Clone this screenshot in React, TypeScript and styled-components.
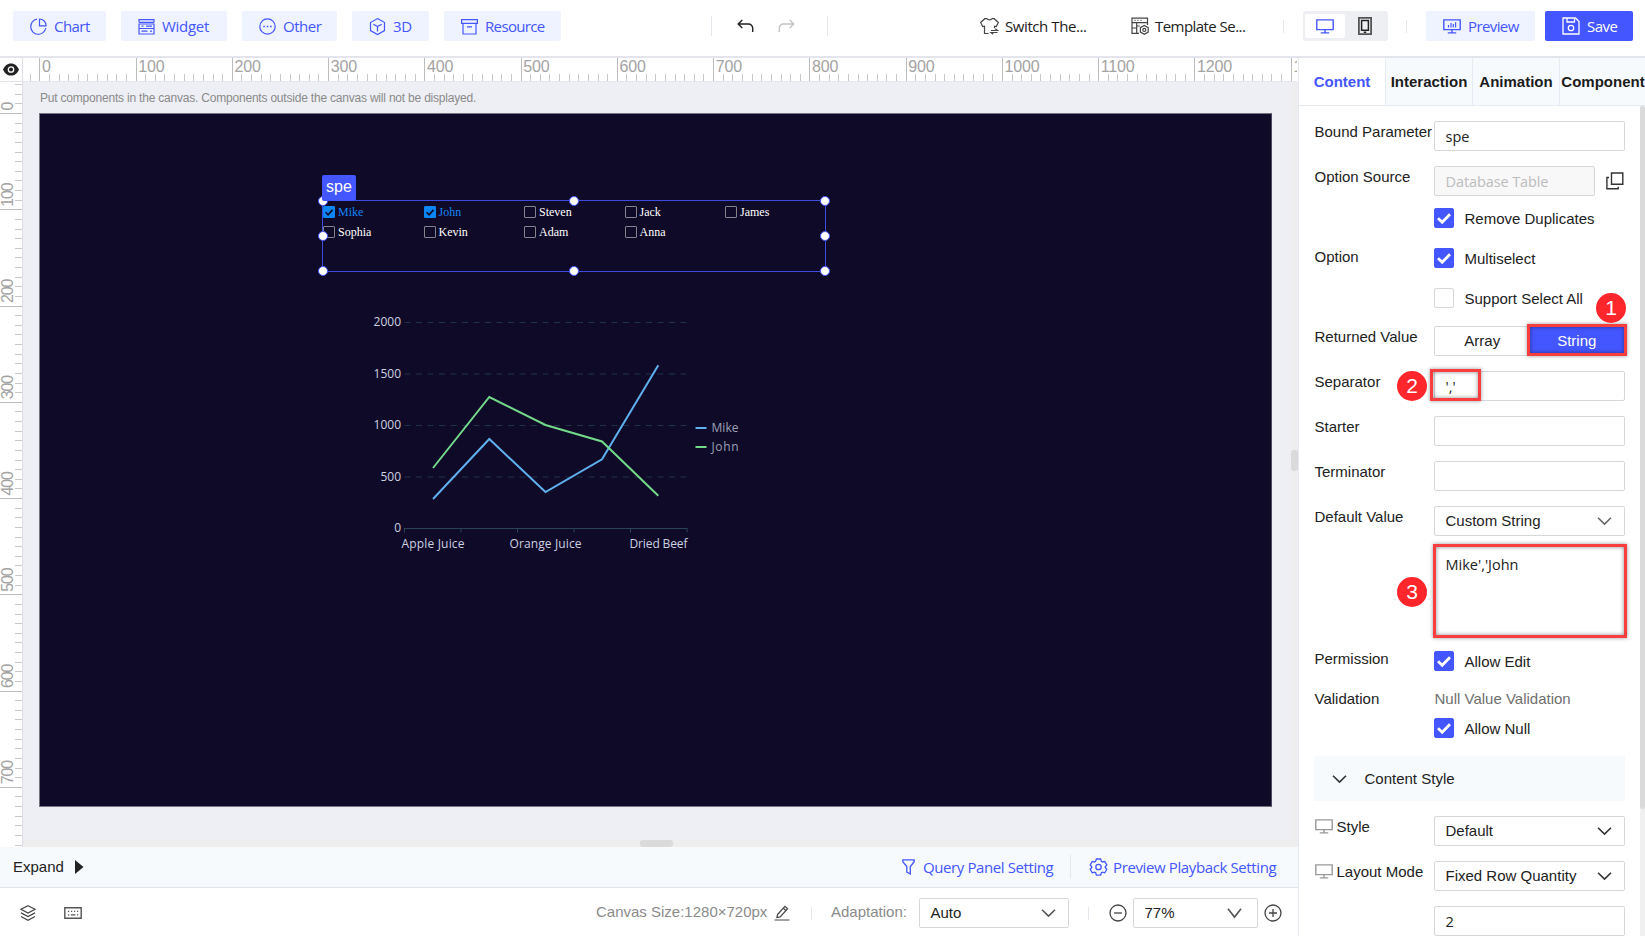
import type { ReactNode } from 'react'
import styled, { createGlobalStyle, css } from 'styled-components'

const ARIAL = `'Liberation Sans', Arial, sans-serif`
const SEGOE = `'Open Sans', 'Noto Sans', sans-serif`
const PRIMARY = '#4456ff'
const SCALE = 0.9626

const GlobalStyle = createGlobalStyle`
  * {
    box-sizing: border-box;
  }

  body {
    margin: 0;
    overflow: hidden;
    background: #fff;
    color: #222;
    font-family: ${ARIAL};
    font-size: 15px;
  }

  svg {
    display: block;
    flex-shrink: 0;
    overflow: visible;
  }
`

const Page = styled.div`
  display: flex;
  flex-direction: column;
  width: 1645px;
  height: 936px;
  overflow: hidden;
`

const Text = styled.span<{ $w?: number; $ls?: number }>`
  display: inline-block;
  width: ${({ $w }) => ($w ? `${$w}px` : 'auto')};
  letter-spacing: ${({ $ls = 0 }) => $ls}px;
  white-space: nowrap;
`

/* top bar */

const TopBar = styled.header`
  display: flex;
  flex: none;
  align-items: center;
  height: 58px;
  padding: 0 12px 4px 13px;
  border-bottom: 2px solid #e4e5ec;
  font-family: ${SEGOE};
  font-size: 15px;
`

const MenuGroup = styled.nav`
  display: flex;
  gap: 15px;
  width: 698px;
`

const ToolButton = styled.button<{ $width: number; $solid?: boolean }>`
  display: flex;
  align-items: center;
  gap: 7px;
  width: ${({ $width }) => $width}px;
  height: 30px;
  padding: 0 0 0 17px;
  border: 0;
  border-radius: 2px;
  background: ${({ $solid }) => ($solid ? PRIMARY : '#eff3ff')};
  color: ${({ $solid }) => ($solid ? '#fff' : PRIMARY)};
  font: inherit;
`

const Divider = styled.i<{ $h?: number }>`
  flex: none;
  width: 1px;
  height: ${({ $h = 20 }) => $h}px;
  background: #e6e7ec;
`

const History = styled.div`
  display: flex;
  gap: 24px;
  width: 115px;
  padding-left: 25px;
`

const TopLink = styled.div<{ $left: number; $width: number }>`
  display: flex;
  align-items: center;
  gap: 6px;
  width: ${({ $width }) => $width}px;
  margin-left: ${({ $left }) => $left}px;
`

const DeviceSwitch = styled.div`
  display: flex;
  width: 85px;
  height: 30px;
  margin: 0 18px 0 19px;
  padding: 3px 2px;
  border-radius: 3px;
  background: #eeeff3;
`

const Device = styled.div<{ $active?: boolean }>`
  display: grid;
  place-items: center;
  width: 40px;
  border-radius: 2px;
  background: ${({ $active }) => ($active ? '#fff' : 'none')};
`

const Actions = styled.div`
  display: flex;
  gap: 10px;
  margin-left: 19px;
`

/* workspace */

const Body = styled.div`
  display: flex;
  flex: 1;
  min-height: 0;
`

const Workspace = styled.main`
  display: flex;
  flex-direction: column;
  width: 1298px;
`

const Board = styled.div`
  display: grid;
  grid-template: 24px 765px / 23px 1275px;
  height: 789px;
`

const Corner = styled.div`
  display: flex;
  align-items: center;
  padding-left: 3px;
  border-right: 1px solid #dedfe6;
  border-bottom: 1px solid #e4e5ec;
`

const RulerTop = styled.svg`
  width: 1274px;
  height: 24px;
  border-bottom: 1px solid #e4e5ec;
  && {
    overflow: hidden;
  }
`

const RulerLeft = styled.svg`
  width: 23px;
  height: 765px;
  border-right: 1px solid #dedfe6;
  && {
    overflow: hidden;
  }
`

const Viewport = styled.div`
  display: grid;
  grid-template: 758px 7px / 1268px 7px;
  background: #eeeff4;
`

const Stage = styled.div`
  padding-left: 16px;
`

const Hint = styled.p`
  height: 30px;
  margin: 0;
  padding-left: 1px;
  color: #8a8a8a;
  font-size: 12px;
  letter-spacing: -0.205px;
  line-height: 32px;
`

const Canvas = styled.div`
  position: relative;
  width: 1233px;
  height: 694px;
  margin-top: 1px;
  border: 1px solid #75747f;
  border-right-color: #4c4a5e;
  background: #100a29;
`

const TrackY = styled.div`
  padding-top: 368px;
  background: #eeeeef;
`

const TrackX = styled.div`
  grid-column: 1 / 3;
  padding-left: 617px;
  background: #eeeeef;
`

const Thumb = styled.div<{ $w: number; $h: number }>`
  width: ${({ $w }) => $w}px;
  height: ${({ $h }) => $h}px;
  border-radius: 3px;
  background: #dadadb;
`

/* free-placed components on the canvas */

const Selection = styled.div`
  position: absolute;
  left: 282px;
  top: 86px;
  width: 504px;
  height: 72px;
  border: 1px solid #3c4be0;
`

const Tag = styled.div`
  position: absolute;
  left: -1px;
  top: -26px;
  width: 34px;
  height: 26px;
  border-radius: 2px;
  background: ${PRIMARY};
  color: #fff;
  font-size: 16px;
  line-height: 24px;
  text-align: center;
`

const Handle = styled.i<{ $x: number; $y: number }>`
  position: absolute;
  left: ${({ $x }) => $x}%;
  top: ${({ $y }) => $y}%;
  width: 10px;
  height: 10px;
  margin: -5px 0 0 -5px;
  border: 1px solid ${PRIMARY};
  border-radius: 50%;
  background: #fff;
`

const CheckGrid = styled.div`
  display: grid;
  grid-template-columns: repeat(5, 100.5px);
  grid-auto-rows: 20px;
  padding-top: 1px;
  overflow: hidden;
`

const CheckItem = styled.label<{ $on: boolean }>`
  display: flex;
  align-items: center;
  gap: 3px;
  color: ${({ $on }) => ($on ? '#0d86f5' : '#fff')};
  font: 12px 'Liberation Serif', 'Times New Roman', serif;
`

const SmallBox = styled.i<{ $on: boolean }>`
  display: grid;
  place-items: center;
  width: 12px;
  height: 12px;
  border: 1px solid ${({ $on }) => ($on ? '#0d86f5' : '#83828f')};
  border-radius: 1px;
  background: ${({ $on }) => ($on ? '#0d86f5' : 'none')};
`

const LineChart = styled.svg`
  position: absolute;
  left: 320px;
  top: 186px;
  width: 420px;
  height: 270px;
  font-family: ${SEGOE};
  font-size: 12px;
`

/* footer bars */

const PanelBar = styled.div`
  display: flex;
  align-items: center;
  height: 41px;
  padding: 0 0 1px 13px;
  border-bottom: 1px solid #e2e5ec;
  background: #f6fafd;
`

const BarLink = styled.div<{ $left: number; $gap: number; $width: number }>`
  display: flex;
  align-items: center;
  gap: ${({ $gap }) => $gap}px;
  width: ${({ $width }) => $width}px;
  margin-left: ${({ $left }) => $left}px;
  color: ${PRIMARY};
  font-family: ${SEGOE};
`

const StatusBar = styled.div`
  display: flex;
  align-items: center;
  height: 48px;
  padding: 2px 0 0 20px;
  color: #8b8b8b;
`

const StatusItem = styled.div<{ $left: number; $width: number }>`
  display: flex;
  flex: none;
  align-items: center;
  width: ${({ $width }) => $width}px;
  margin-left: ${({ $left }) => $left}px;
`

const StatusText = styled(Text)`
  padding-bottom: 3px;
`

/* right panel */

const Panel = styled.aside`
  display: flex;
  flex-direction: column;
  width: 347px;
  border-left: 1px solid #e4e8f0;
  overflow: hidden;
`

const Tabs = styled.div`
  display: flex;
  flex: none;
  height: 48px;
  border-bottom: 1px solid #e6ebf3;
`

const Tab = styled.div<{ $active?: boolean }>`
  display: flex;
  flex: none;
  align-items: center;
  justify-content: center;
  width: 87px;
  border-right: 1px solid #e6ebf3;
  background: ${({ $active }) => ($active ? '#fff' : '#f6fafd')};
  color: ${({ $active }) => ($active ? PRIMARY : '#1c1c1c')};
  font-weight: bold;
`

const PanelBody = styled.div`
  display: flex;
  flex: 1;
  min-height: 0;
`

const Form = styled.div`
  display: flex;
  flex: 1;
  flex-direction: column;
  padding: 15px 15px 0 15px;
`

const PanelScroll = styled.div`
  width: 5px;
  background: #f0f0f0;
`

const Row = styled.div<{ $gap?: number }>`
  display: flex;
  flex: none;
  margin-bottom: ${({ $gap = 15 }) => $gap}px;
`

const Label = styled.div<{ $shift?: number }>`
  display: flex;
  align-items: center;
  gap: 4px;
  width: 120px;
  height: 22px;
  margin-top: ${({ $shift = -1 }) => $shift}px;
  padding-left: 0.5px;
  white-space: nowrap;
`

const Field = styled.div`
  position: relative;
  display: flex;
  flex: none;
  flex-direction: column;
  width: 191px;
`

const CheckStack = styled(Field)`
  gap: 20px;
`

const ValidationField = styled(Field)`
  gap: 8px;
  padding-top: 2px;
`

const Inline = styled.div`
  display: flex;
  align-items: center;
  justify-content: space-between;
  padding-right: 1px;
`

const control = css`
  border: 1px solid #d6d7da;
  border-radius: 2px;
  background: #fff;
`

const Input = styled.div<{ $disabled?: boolean }>`
  ${control}
  width: ${({ $disabled }) => ($disabled ? '161px' : '100%')};
  height: 30px;
  padding-left: 10.5px;
  font-family: ${SEGOE};
  font-size: 14.5px;
  line-height: 29px;
  ${({ $disabled }) =>
    $disabled &&
    css`
      background: #f8f8f8;
      color: #bcbcbc;
    `}
`

const SelectBox = styled.div<{ $width: number; $pr?: number }>`
  ${control}
  display: flex;
  align-items: center;
  justify-content: space-between;
  width: ${({ $width }) => $width}px;
  height: 30px;
  padding: 0 ${({ $pr = 12 }) => $pr}px 1px 10.5px;
  color: #222;
`

const TextArea = styled.div`
  ${control}
  height: 90px;
  padding: 5px 10.5px;
  font-family: ${SEGOE};
  font-size: 14.5px;
  line-height: 26px;
`

const CheckRow = styled.div`
  display: flex;
  align-items: center;
  gap: 10.5px;
  height: 20px;
  line-height: 20px;
`

const CheckText = styled.span`
  padding-top: 1px;
`

const Box = styled.i<{ $on: boolean }>`
  display: grid;
  place-items: center;
  width: 20px;
  height: 20px;
  border: 1px solid ${({ $on }) => ($on ? PRIMARY : '#d6d7da')};
  border-radius: 2px;
  background: ${({ $on }) => ($on ? PRIMARY : '#fff')};
`

const Segmented = styled.div`
  ${control}
  display: flex;
  height: 30px;
`

const Segment = styled.div<{ $active?: boolean }>`
  display: grid;
  place-items: center;
  width: 50%;
  padding-bottom: 1px;
  background: ${({ $active }) => ($active ? PRIMARY : '#fff')};
  color: ${({ $active }) => ($active ? '#fff' : '#222')};
`

const Muted = styled.div`
  height: 22px;
  padding-left: 0.5px;
  color: #6f6f6f;
  line-height: 21px;
`

const SectionHead = styled.div`
  display: flex;
  flex: none;
  align-items: center;
  gap: 18px;
  height: 45px;
  margin-bottom: 15px;
  padding-left: 17.5px;
  background: #f6fafd;
`

const Highlight = styled.div<{ $x: number; $y: number; $w: number; $h: number }>`
  position: absolute;
  left: ${({ $x }) => $x}px;
  top: ${({ $y }) => $y}px;
  width: ${({ $w }) => $w}px;
  height: ${({ $h }) => $h}px;
  border: 3px solid #f83e3e;
  box-shadow:
    0 0 4px rgba(0, 0, 0, 0.4),
    inset 0 0 4px rgba(0, 0, 0, 0.45);
`

const StepBadge = styled.div<{ $x: number; $y: number }>`
  position: absolute;
  left: ${({ $x }) => $x}px;
  top: ${({ $y }) => $y}px;
  width: 30px;
  height: 30px;
  border-radius: 50%;
  background: #ff262c;
  color: #fff;
  font-size: 21px;
  line-height: 30px;
  text-align: center;
`

/* icons */

type IconProps = {
  w?: number
  h?: number
  color?: string
  sw?: number
  children: ReactNode
}

const Icon = ({ w = 17, h = 17, color = 'currentColor', sw = 1.2, children }: IconProps) => (
  <svg width={w} height={h} viewBox={`0 0 ${w} ${h}`} fill="none" stroke={color} strokeWidth={sw}>
    {children}
  </svg>
)

const PieIcon = () => (
  <Icon>
    <path d="M7 1.200A7.600 7.600 0 1 0 15.800 10" />
    <path d="M9.500 1v6.800h6.600A6.700 6.700 0 0 0 9.500 1z" />
  </Icon>
)

const WidgetIcon = () => (
  <Icon>
    <path d="M1 4.300V1.700h15v2.600M1 6h15v4.500H1zM1 10.500h15V16H1zM1 4.300h15" />
    <path d="M3.500 8.200h2M8 8.200h6M3.500 13.200h6M12 13.200h2" />
  </Icon>
)

const OtherIcon = () => (
  <Icon>
    <circle cx="8.500" cy="8.500" r="7.700" />
    <path d="M4.300 8.500h1.600M7.700 8.500h1.600M11.100 8.500h1.600" strokeWidth="1.600" />
  </Icon>
)

const CubeIcon = () => (
  <Icon>
    <path d="M8.500.6l7 4v8l-7 4-7-4v-8z" />
    <path d="M4.300 6.200l4.200 2.400 4.200-2.400M8.500 8.600v5" />
  </Icon>
)

const ResourceIcon = () => (
  <Icon>
    <path d="M.6 1.700h15.800v3.600H.6zM2 5.300V16h13V5.300M6 8.800h5" />
  </Icon>
)

const UndoIcon = ({ color, flip }: { color: string; flip?: boolean }) => (
  <Icon w={17} h={14} color={color} sw={1.4}>
    <path
      d="M5.300 1L1.200 5l4.100 4M1.200 5H11.500a4.200 4.200 0 0 1 4.200 4.200V13"
      transform={flip ? 'translate(17 0) scale(-1 1)' : undefined}
    />
  </Icon>
)

const ShirtIcon = () => (
  <Icon w={19} h={18} color="#444">
    <path d="M8.500 16.500h-4V9.200l-1.800.3L.7 5.500 4.800 1.700h2c1.200 1.600 4.200 1.600 5.400 0h2l4.100 3.800-2 4-1.800-.3v2" />
    <path d="M11 13.500h6.500l-2.200-1.700M17.500 15.500H11l2.200 1.800" />
  </Icon>
)

const TemplateIcon = () => (
  <Icon w={18} h={18} color="#444">
    <path d="M8 16.400H1V1.200h15.500V8M1 5.600h15.500M5.700 5.600v10.800M1 11h4.700M5.700 9h3" />
    <path d="M3.500 3.400h1M6.500 3.400h1M9.500 3.400h1" />
    <path d="M13.300 8.500l3.900 2.200v4.400l-3.900 2.200-3.900-2.200v-4.400z" />
    <circle cx="13.300" cy="12.900" r="1.500" />
  </Icon>
)

const MonitorIcon = ({ color, bars }: { color?: string; bars?: boolean }) => (
  <Icon w={18} h={15} color={color} sw={1.4}>
    <path d="M.8.9h16.400v9.700H.8zM9 10.600v3M4.800 13.900h8.400" />
    {bars && <path d="M5.500 8.500V6M8 8.500V4M10.300 8.500V5M12.600 8.500V3.300" strokeWidth="1.200" />}
  </Icon>
)

const PhoneIcon = () => (
  <Icon w={14} h={18} color="#222" sw={1.5}>
    <path d="M.9.9h12.200v16.200H.9z" stroke="#555" strokeWidth="1.800" />
    <path d="M3.600 3.600h6.800v9.600H3.600zM5.800 15.300h2.400" />
  </Icon>
)

const SaveIcon = () => (
  <Icon w={18} h={18} sw={1.3}>
    <path d="M1 1h12.500L17 4.500V17H1zM5 1v4h7.500V1" />
    <circle cx="9" cy="11" r="2.700" />
  </Icon>
)

const EyeIcon = () => (
  <svg width="16" height="13" viewBox="0 0 16 13">
    <path d="M0 6.500C2 2.500 4 .4 8 .4s6 2.100 8 6.100c-2 4-4 6.100-8 6.100S2 10.500 0 6.500z" fill="#222" />
    <circle cx="8" cy="6.500" r="2.700" fill="none" stroke="#fff" strokeWidth="1.300" />
  </svg>
)

const CopyIcon = () => (
  <Icon w={18} h={18} color="#333" sw={1.4}>
    <path d="M5.500 1h11.300v11.300H5.500z" />
    <path d="M3 5.500H.9v11.300h11.300v-2" />
  </Icon>
)

const Chevron = ({ color = '#333', h = 8 }: { color?: string; h?: number }) => (
  <Icon w={15} h={h} color={color} sw={1.6}>
    <path d={`M1 .7l6.500 ${h - 1.6} 6.500-${h - 1.6}`} />
  </Icon>
)

const TickIcon = () => (
  <Icon w={14} h={11} color="#fff" sw={2.8}>
    <path d="M1 5.300l4.200 3.900L13 1.200" />
  </Icon>
)

const FunnelIcon = () => (
  <Icon w={13} h={16} sw={1.3}>
    <path d="M.8.9h11.400v1.800L8.300 7.500V15l-3.500-2V7.500L.8 2.700z" />
  </Icon>
)

const GearIcon = () => (
  <Icon w={17} h={18} sw={1.3}>
    <path d="M6.400 1h4.200l.8 2.400 1 .6 2.400-.6 2 3.600-1.600 1.800v.6l1.600 1.800-2 3.600-2.400-.6-1 .6-.8 2.400H6.400l-.8-2.400-1-.6-2.400.6-2-3.600 1.600-1.800v-.6L.2 7l2-3.600 2.400.6 1-.6z" />
    <circle cx="8.500" cy="9" r="2.700" />
  </Icon>
)

const LayersIcon = () => (
  <Icon w={16} h={16} color="#444">
    <path d="M8 .7l7 3.600-7 3.700-7-3.700zM1 7.900l7 3.700 7-3.700M1 11.500l7 3.700 7-3.700" />
  </Icon>
)

const KeyboardIcon = () => (
  <Icon w={18} h={12} color="#555">
    <path d="M.8.8h16.400v10.400H.8z" strokeWidth="1.400" />
    <path d="M4 4.300h1.200M7 4.300h1.200M10 4.300h1.200M13 4.300h1.200M4 7.900h1.200M6.800 7.900h4.600M13 7.900h1.200" />
  </Icon>
)

const PencilIcon = () => (
  <Icon w={16} h={16} color="#444">
    <path d="M3.500 9.500L11 1.300l2.600 2.400-7.400 8.200-3.300.7zM9.300 3.100l2.600 2.400M.5 15h15" />
  </Icon>
)

const ZoomIcon = ({ plus }: { plus?: boolean }) => (
  <Icon w={18} h={18} color="#444" sw={1.3}>
    <circle cx="9" cy="9" r="8" />
    <path d={plus ? 'M5 9h8M9 5v8' : 'M5 9h8'} />
  </Icon>
)

/* data */

const MENU = [
  { label: 'Chart', width: 93, ls: -0.55, icon: <PieIcon /> },
  { label: 'Widget', width: 106, ls: -0.3, icon: <WidgetIcon /> },
  { label: 'Other', width: 95, ls: -0.5, icon: <OtherIcon /> },
  { label: '3D', width: 77, ls: -0.4, icon: <CubeIcon /> },
  { label: 'Resource', width: 117, ls: -0.65, icon: <ResourceIcon /> },
]

const PEOPLE = ['Mike', 'John', 'Steven', 'Jack', 'James', 'Sophia', 'Kevin', 'Adam', 'Anna']
const SELECTED = ['Mike', 'John']

const HANDLES = [
  [0, 0], [50, 0], [100, 0],
  [0, 50], [100, 50],
  [0, 100], [50, 100], [100, 100],
]

const SERIES = [
  { name: 'Mike', color: '#5fb0ee', points: '83,199 139.3,139 195.5,192 252,159.3 308.3,65.3' },
  { name: 'John', color: '#73d98a', points: '83,168 139.3,97 195.5,125 252,141.5 308.3,195.7' },
]

const Y_AXIS = [2000, 1500, 1000, 500, 0]
const X_AXIS = [
  { label: 'Apple Juice', x: 83, w: 63 },
  { label: 'Orange Juice', x: 195.5, w: 72 },
  { label: 'Dried Beef', x: 308.5, w: 58 },
]

const ticks = (from: number, to: number) =>
  Array.from({ length: to - from + 1 }, (_, i) => from + i)

const HorizontalRuler = () => (
  <RulerTop>
    {ticks(-1, 130).map(i => {
      const x = Math.round(16.3 + i * 10 * SCALE) + 0.5
      const major = i % 10 === 0
      return <path key={i} d={`M${x} ${major ? 0 : 16}V23`} stroke={major ? '#bdbdbd' : '#c9c9c9'} />
    })}
    {ticks(0, 13).map(i => (
      <text key={i} x={19 + i * 100 * SCALE} y={13.5} fontSize={16} letterSpacing={-0.2} fill="#a3a3a3">
        {i * 100}
      </text>
    ))}
  </RulerTop>
)

const VerticalRuler = () => (
  <RulerLeft>
    {ticks(-3, 76).map(i => {
      const y = Math.round(31 + i * 10 * SCALE) + 0.5
      const major = i % 10 === 0
      return <path key={i} d={`M${major ? 0 : 15} ${y}H22`} stroke={major ? '#bdbdbd' : '#c9c9c9'} />
    })}
    {ticks(0, 7).map(i => (
      <text
        key={i}
        transform={`translate(12.5 ${28.5 + i * 100 * SCALE}) rotate(-90)`}
        fontSize={16}
        textLength={i ? 24.5 : undefined}
        fill="#a3a3a3"
      >
        {i * 100}
      </text>
    ))}
  </RulerLeft>
)

const CheckboxWidget = () => (
  <Selection>
    <CheckGrid>
      {PEOPLE.map(name => {
        const on = SELECTED.includes(name)
        return (
          <CheckItem key={name} $on={on}>
            <SmallBox $on={on}>
              {on && (
                <Icon w={8} h={7} color="#100a29" sw={1.6}>
                  <path d="M.6 3.200l2.500 2.600L7.500.9" />
                </Icon>
              )}
            </SmallBox>
            {name}
          </CheckItem>
        )
      })}
    </CheckGrid>
    {HANDLES.map(([x, y]) => (
      <Handle key={`${x}-${y}`} $x={x} $y={y} />
    ))}
    <Tag>spe</Tag>
  </Selection>
)

const SalesChart = () => (
  <LineChart viewBox="10 0 420 270">
    {Y_AXIS.map((value, i) => {
      const y = 22.5 + i * 51.5
      return (
        <g key={value}>
          <text x={51} y={y + 3.5} textAnchor="end" fill="#ccd1e0">
            {value}
          </text>
          {value > 0 && <path d={`M54.500 ${y}H337`} stroke="#1c3349" strokeDasharray="6 5.500" />}
        </g>
      )
    })}
    <path
      d="M54.500 228.500H337M54.500 228v4.500M111 228v4.500M167.500 228v4.500M224 228v4.500M280.500 228v4.500M337 228v4.500"
      stroke="#2b4258"
      fill="none"
    />
    {X_AXIS.map(({ label, x, w }) => (
      <text key={label} x={x} y={248} textAnchor="middle" textLength={w} fill="#ccd1e0">
        {label}
      </text>
    ))}
    {SERIES.map(({ name, color, points }, i) => (
      <g key={name}>
        <polyline points={points} fill="none" stroke={color} strokeWidth={2} />
        <path d={`M345.500 ${128 + i * 19}h11`} stroke={color} strokeWidth={2} />
        <text x={361.5} y={132 + i * 19} textLength={27} fill="#9ba1b4">
          {name}
        </text>
      </g>
    ))}
  </LineChart>
)

const Check = ({ label, on = true }: { label: string; on?: boolean }) => (
  <CheckRow>
    <Box $on={on}>{on && <TickIcon />}</Box>
    <CheckText>{label}</CheckText>
  </CheckRow>
)

const SettingsForm = () => (
  <Form>
    <Row>
      <Label>Bound Parameter</Label>
      <Field>
        <Input>spe</Input>
      </Field>
    </Row>
    <Row $gap={12}>
      <Label>Option Source</Label>
      <Field>
        <Inline>
          <Input $disabled>
            <Text $ls={-0.1}>Database Table</Text>
          </Input>
          <CopyIcon />
        </Inline>
      </Field>
    </Row>
    <Row $gap={20}>
      <Label $shift={-2} />
      <Check label="Remove Duplicates" />
    </Row>
    <Row $gap={18}>
      <Label $shift={-3}>Option</Label>
      <CheckStack>
        <Check label="Multiselect" />
        <Check label="Support Select All" on={false} />
      </CheckStack>
    </Row>
    <Row>
      <Label>Returned Value</Label>
      <Field>
        <Segmented>
          <Segment>Array</Segment>
          <Segment $active>String</Segment>
        </Segmented>
        <Highlight $x={93} $y={-2} $w={100} $h={32} />
        <StepBadge $x={162} $y={-33}>1</StepBadge>
      </Field>
    </Row>
    <Row>
      <Label>Separator</Label>
      <Field>
        <Input>','</Input>
        <Highlight $x={-4} $y={-2} $w={51} $h={32} />
        <StepBadge $x={-37} $y={0}>2</StepBadge>
      </Field>
    </Row>
    <Row>
      <Label>Starter</Label>
      <Field>
        <Input />
      </Field>
    </Row>
    <Row>
      <Label>Terminator</Label>
      <Field>
        <Input />
      </Field>
    </Row>
    <Row $gap={10}>
      <Label>Default Value</Label>
      <Field>
        <SelectBox $width={191}>
          Custom String <Chevron color="#666" />
        </SelectBox>
      </Field>
    </Row>
    <Row>
      <Label />
      <Field>
        <TextArea>Mike','John</TextArea>
        <Highlight $x={-1} $y={-2} $w={194} $h={94} />
        <StepBadge $x={-37} $y={31}>3</StepBadge>
      </Field>
    </Row>
    <Row $gap={15}>
      <Label $shift={-4}>Permission</Label>
      <Check label="Allow Edit" />
    </Row>
    <Row $gap={18}>
      <Label $shift={1}>Validation</Label>
      <ValidationField>
        <Muted>Null Value Validation</Muted>
        <Check label="Allow Null" />
      </ValidationField>
    </Row>
    <SectionHead>
      <Chevron />
      Content Style
    </SectionHead>
    <Row>
      <Label>
        <MonitorIcon color="#999" />
        Style
      </Label>
      <SelectBox $width={191}>
        Default <Chevron />
      </SelectBox>
    </Row>
    <Row>
      <Label>
        <MonitorIcon color="#999" />
        Layout Mode
      </Label>
      <SelectBox $width={191}>
        Fixed Row Quantity <Chevron />
      </SelectBox>
    </Row>
    <Row $gap={0}>
      <Label />
      <Field>
        <Input>2</Input>
      </Field>
    </Row>
  </Form>
)

const App = () => (
  <Page>
    <GlobalStyle />
    <TopBar>
      <MenuGroup>
        {MENU.map(({ label, width, ls, icon }) => (
          <ToolButton key={label} $width={width}>
            {icon}
            <Text $ls={ls}>{label}</Text>
          </ToolButton>
        ))}
      </MenuGroup>
      <Divider />
      <History>
        <UndoIcon color="#222" />
        <UndoIcon color="#c4c4c4" flip />
      </History>
      <Divider />
      <TopLink $left={152} $width={107}>
        <ShirtIcon />
        <Text $ls={-0.42}>Switch The...</Text>
      </TopLink>
      <TopLink $left={44} $width={152}>
        <TemplateIcon />
        <Text $ls={-0.55}>Template Se...</Text>
      </TopLink>
      <Divider $h={13} />
      <DeviceSwitch>
        <Device $active>
          <MonitorIcon color={PRIMARY} />
        </Device>
        <Device>
          <PhoneIcon />
        </Device>
      </DeviceSwitch>
      <Divider $h={13} />
      <Actions>
        <ToolButton $width={109}>
          <MonitorIcon bars />
          <Text $ls={-0.6}>Preview</Text>
        </ToolButton>
        <ToolButton $width={88} $solid>
          <SaveIcon />
          <Text $ls={-0.5}>Save</Text>
        </ToolButton>
      </Actions>
    </TopBar>
    <Body>
      <Workspace>
        <Board>
          <Corner>
            <EyeIcon />
          </Corner>
          <HorizontalRuler />
          <VerticalRuler />
          <Viewport>
            <Stage>
              <Hint>Put components in the canvas. Components outside the canvas will not be displayed.</Hint>
              <Canvas>
                <SalesChart />
                <CheckboxWidget />
              </Canvas>
            </Stage>
            <TrackY>
              <Thumb $w={7} $h={21} />
            </TrackY>
            <TrackX>
              <Thumb $w={33} $h={7} />
            </TrackX>
          </Viewport>
        </Board>
        <PanelBar>
          <Text $w={62}>Expand</Text>
          <svg width="9" height="14" viewBox="0 0 9 14">
            <path d="M0 0l8.500 7L0 14z" fill="#222" />
          </svg>
          <BarLink $left={818} $gap={8} $width={168}>
            <FunnelIcon />
            <Text $ls={-0.4}>Query Panel Setting</Text>
          </BarLink>
          <Divider $h={24} />
          <BarLink $left={19} $gap={6} $width={190}>
            <GearIcon />
            <Text $ls={-0.38}>Preview Playback Setting</Text>
          </BarLink>
        </PanelBar>
        <StatusBar>
          <LayersIcon />
          <StatusItem $left={28} $width={18}>
            <KeyboardIcon />
          </StatusItem>
          <StatusItem $left={514} $width={215}>
            <StatusText $w={178}>Canvas Size:1280×720px</StatusText>
            <PencilIcon />
          </StatusItem>
          <Divider $h={13} />
          <StatusItem $left={19} $width={257}>
            <StatusText $w={88}>Adaptation:</StatusText>
            <SelectBox $width={150}>
              Auto <Chevron color="#555" />
            </SelectBox>
          </StatusItem>
          <Divider $h={13} />
          <StatusItem $left={20} $width={180}>
            <ZoomIcon />
            <StatusItem $left={6} $width={131}>
              <SelectBox $width={125} $pr={15}>
                77% <Chevron color="#555" h={10} />
              </SelectBox>
            </StatusItem>
            <ZoomIcon plus />
          </StatusItem>
        </StatusBar>
      </Workspace>
      <Panel>
        <Tabs>
          <Tab $active>Content</Tab>
          <Tab>Interaction</Tab>
          <Tab>Animation</Tab>
          <Tab>Component</Tab>
        </Tabs>
        <PanelBody>
          <SettingsForm />
          <PanelScroll>
            <Thumb $w={5} $h={703} />
          </PanelScroll>
        </PanelBody>
      </Panel>
    </Body>
  </Page>
)

export default App
